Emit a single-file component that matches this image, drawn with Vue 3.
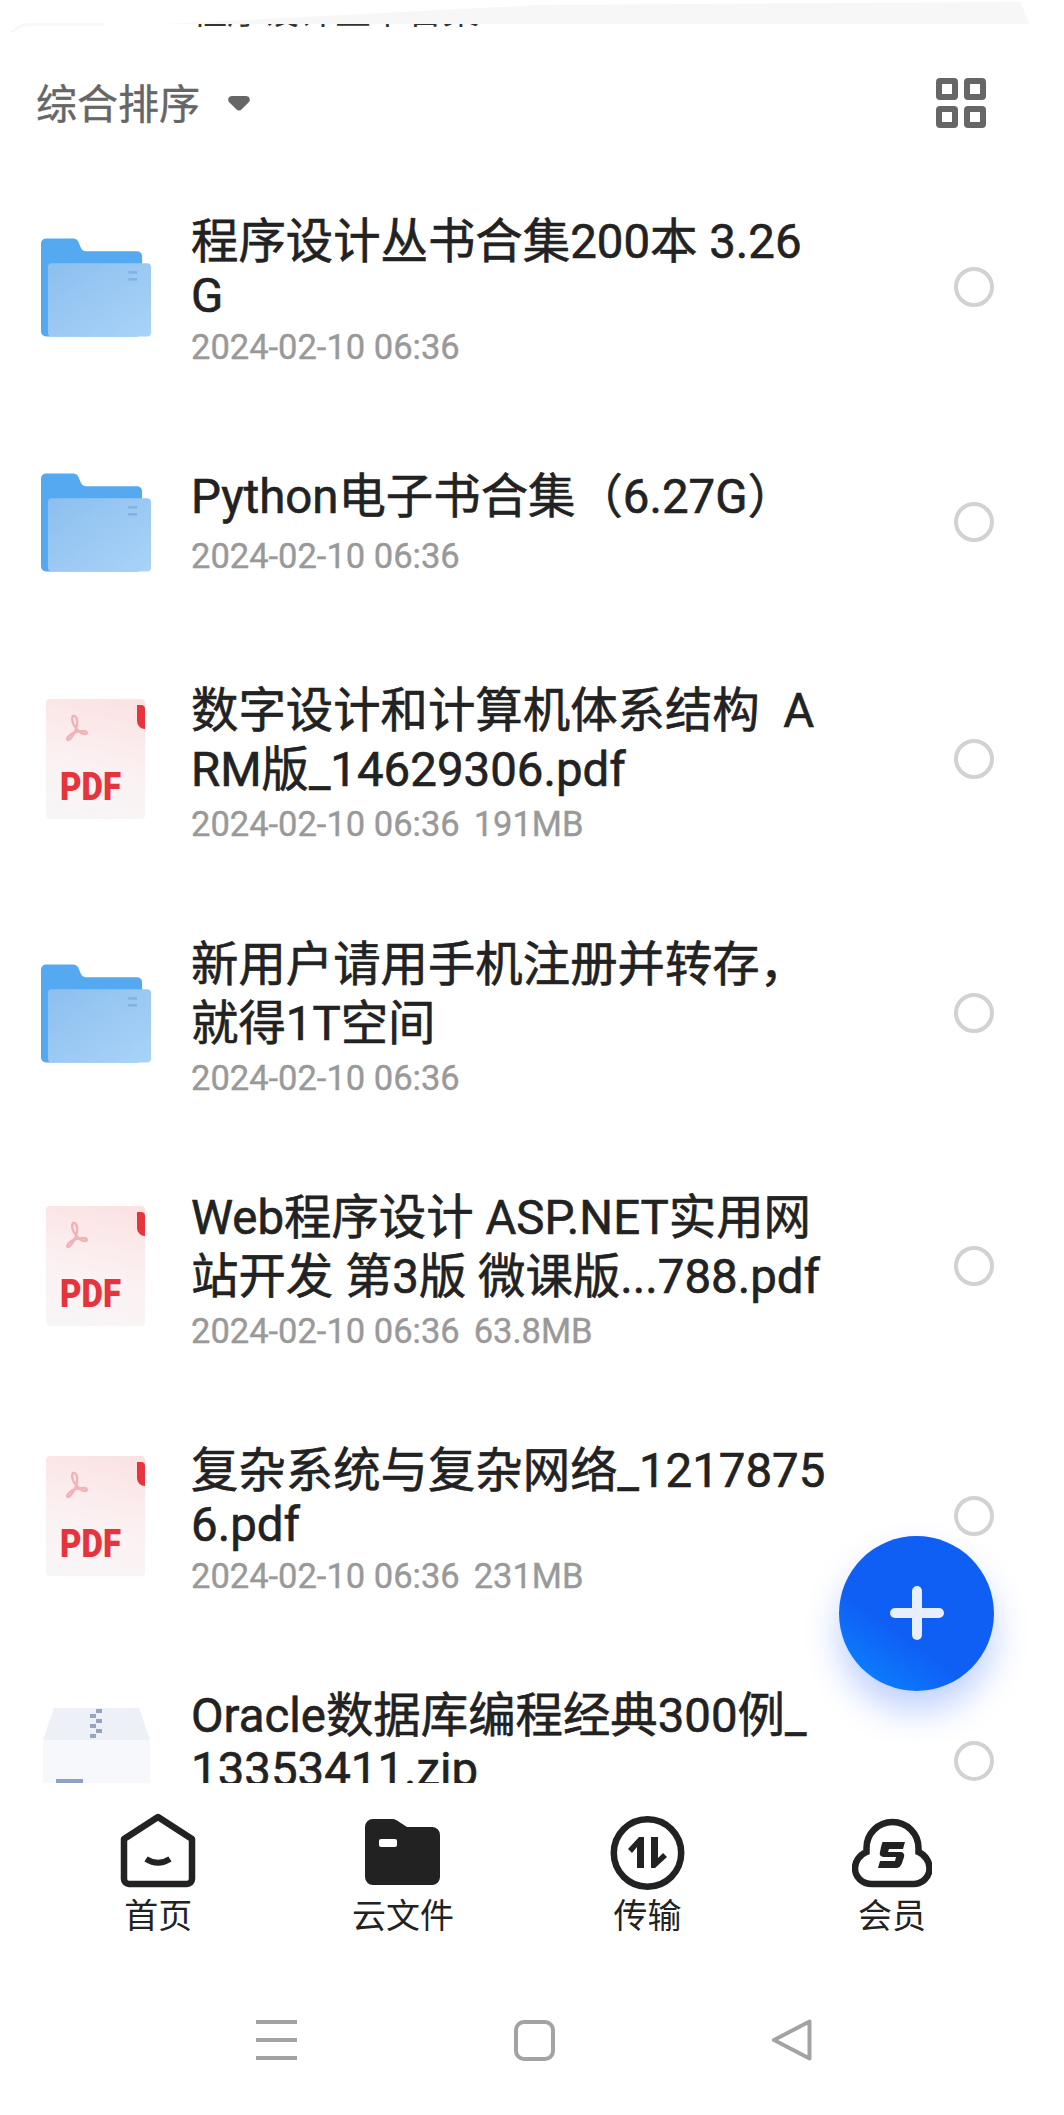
<template>
  <div class="screen">
    <div class="peek">
      <div class="peek-strip"></div>
      <div class="peek-corner"></div>
      <div class="peek-text">程序设计丛书合集</div>
    </div>

    <div class="sort-bar">
      <div class="sort-label">综合排序</div>
      <svg class="sort-arrow" viewBox="0 0 24 16" width="24" height="16">
        <path d="M5 1h14c3 0 5 3 3 6l-7 7c-2 2-4 2-6 0L2 7C0 4 2 1 5 1z" fill="#666" />
      </svg>
      <svg class="grid-icon" viewBox="0 0 50 50" width="50" height="50">
        <rect x="3" y="3" width="16" height="16" rx="1" />
        <rect x="31" y="3" width="16" height="16" rx="1" />
        <rect x="3" y="31" width="16" height="16" rx="1" />
        <rect x="31" y="31" width="16" height="16" rx="1" />
      </svg>
    </div>

    <div class="list">
      <div v-for="(row, i) in rows" :key="i" class="row" :style="{ marginBottom: row.gap + 'px' }">
        <div class="file-icon">
          <svg v-if="row.type === 'folder'" viewBox="0 0 112 100" width="112" height="100">
            <defs>
              <linearGradient :id="'front' + i" x1="0" y1="0" x2="1" y2="1">
                <stop offset="0" stop-color="#8cbfef" />
                <stop offset="1" stop-color="#a9d3f8" />
              </linearGradient>
            </defs>
            <path d="M0 6a5 5 0 0 1 5-5h28a6 6 0 0 1 5 4l2 5a6 6 0 0 0 5 4h52a5 5 0 0 1 5 5v76a5 5 0 0 1-5 5H5a5 5 0 0 1-5-5z" fill="#55a9f0" />
            <rect x="7" y="26" width="104" height="74" rx="4" :fill="'url(#front' + i + ')'" />
            <rect x="88" y="34" width="9" height="2.5" fill="#7fb2e2" />
            <rect x="88" y="41" width="9" height="2.5" fill="#7fb2e2" />
          </svg>
          <svg v-else-if="row.type === 'pdf'" class="pdf-icon" viewBox="0 0 100 120" width="100" height="120">
            <defs>
              <linearGradient :id="'paper' + i" x1="0.6" y1="0" x2="0.4" y2="1">
                <stop offset="0" stop-color="#fbe3e4" />
                <stop offset="0.55" stop-color="#fbf1f2" />
                <stop offset="1" stop-color="#f8f5f6" />
              </linearGradient>
            </defs>
            <rect x="0" y="0" width="99" height="120" rx="4" :fill="'url(#paper' + i + ')'" />
            <path d="M91 6h4a4 4 0 0 1 4 4v20a8 8 0 0 1-8-8z" fill="#e8343c" />
            <path d="M27 17c-2 3 0 9 3 12 3 4 6 6 9 6 3 0 2-3-1-3-6 0-13 2-16 6-2 3 0 4 2 2 3-3 6-9 7-14 1-5-1-10-4-9z" fill="none" stroke="#efb3b9" stroke-width="2.4" />
            <text x="14" y="101" class="pdf-text" textLength="61" lengthAdjust="spacingAndGlyphs">PDF</text>
          </svg>
          <svg v-else viewBox="0 0 107 106" width="107" height="106">
            <path d="M11 0h85l11 32H0z" fill="#eef0f8" />
            <rect x="0" y="32" width="107" height="74" fill="#f7f8fc" />
            <rect x="53" y="1" width="6" height="4" fill="#98a3bf" />
            <rect x="47" y="6" width="6" height="4" fill="#98a3bf" />
            <rect x="53" y="11" width="6" height="4" fill="#98a3bf" />
            <rect x="47" y="16" width="6" height="4" fill="#98a3bf" />
            <rect x="53" y="21" width="6" height="4" fill="#98a3bf" />
            <rect x="47" y="26" width="6" height="4" fill="#98a3bf" />
            <rect x="13" y="71" width="27" height="6" fill="#8fa2c2" />
          </svg>
        </div>
        <div class="info" :class="{ single: row.lines.length === 1 }">
          <div v-for="line in row.lines" :key="line" class="title" :class="row.cls">{{ line }}</div>
          <div class="meta">{{ row.time }}<span v-if="row.size" class="size">{{ row.size }}</span></div>
        </div>
        <span class="radio"></span>
      </div>
    </div>

    <button class="fab">
      <span class="fab-h"></span>
      <span class="fab-v"></span>
    </button>

    <div class="tabbar">
      <div class="tab">
        <svg viewBox="0 0 80 80" width="80" height="80">
          <path d="M6 27 40 5l34 22v40a5 5 0 0 1-5 5H11a5 5 0 0 1-5-5z" fill="none" stroke="#222" stroke-width="6.5" stroke-linejoin="round" />
          <path d="M28 47c8 5 16 5 24 0" fill="none" stroke="#222" stroke-width="6" />
        </svg>
        <span>首页</span>
      </div>
      <div class="tab">
        <svg viewBox="0 0 80 80" width="80" height="80">
          <path d="M2 15a8 8 0 0 1 8-8h20a7 7 0 0 1 4 1.5L44 15h25a8 8 0 0 1 8 8v42a8 8 0 0 1-8 8H10a8 8 0 0 1-8-8z" fill="#222" />
          <rect x="16" y="27" width="18" height="8" rx="2" fill="#fff" />
        </svg>
        <span>云文件</span>
      </div>
      <div class="tab">
        <svg viewBox="0 0 80 80" width="80" height="80">
          <circle cx="40.5" cy="41" r="33.7" fill="none" stroke="#222" stroke-width="6.5" />
          <path d="M37 25v31h-7V35l-5 6-4-4 11-12z" fill="#222" />
          <path d="M44 56V25h7v21l5-5 4 4-12 11z" fill="#222" />
        </svg>
        <span>传输</span>
      </div>
      <div class="tab">
        <svg viewBox="0 0 80 80" width="80" height="80">
          <path d="M14.5 40v-4a26 26 0 0 1 52 0v4c7 3 11 10 11 16 0 10-8 16-16 16H20c-10 0-17-7-17-16 0-6 4-13 11.5-16z" fill="none" stroke="#222" stroke-width="6.5" />
          <path d="M31 30h22l-2 7H37l-1 3h12c3 0 5 2 4 5l-2 6c-1 3-3 5-6 5H26l2-7h15l1-4H33c-4 0-6-2-5-5l1-5c1-3 1-5 2-5z" fill="#222" />
        </svg>
        <span>会员</span>
      </div>
    </div>

    <div class="sysbar">
      <div class="sys-menu"><i></i><i></i><i></i></div>
      <div class="sys-home"></div>
      <svg class="sys-back" viewBox="0 0 42 42" width="42" height="42">
        <path d="M38.5 2.5v37L3 21z" fill="none" stroke="#a3a3a3" stroke-width="4" stroke-linejoin="round" />
      </svg>
    </div>
  </div>
</template>

<script setup>
const rows = [
  { type: 'folder', gap: 15, lines: ['程序设计丛书合集200本 3.26', 'G'], time: '2024-02-10 06:36', cls: 'tight' },
  { type: 'folder', gap: 17, lines: ['Python电子书合集（6.27G）'], time: '2024-02-10 06:36' },
  { type: 'pdf', gap: 34, lines: ['数字设计和计算机体系结构  A', 'RM版_14629306.pdf'], time: '2024-02-10 06:36', size: '191MB' },
  { type: 'folder', gap: 33, lines: ['新用户请用手机注册并转存，', '就得1T空间'], time: '2024-02-10 06:36' },
  { type: 'pdf', gap: 30, lines: ['Web程序设计 ASP.NET实用网', '站开发 第3版 微课版...788.pdf'], time: '2024-02-10 06:36', size: '63.8MB' },
  { type: 'pdf', gap: 25, lines: ['复杂系统与复杂网络_1217875', '6.pdf'], time: '2024-02-10 06:36', size: '231MB', cls: 'tight' },
  { type: 'zip', gap: 0, lines: ['Oracle数据库编程经典300例_', '13353411.zip'], time: '2024-02-10 06:36', cls: 'tight' }
]
</script>

<style>
html, body {
  margin: 0;
  background: #fff;
}
</style>

<style scoped>
.screen {
  position: relative;
  width: 1064px;
  height: 2115px;
  overflow: hidden;
  background: #fff;
  font-family: Roboto, "Noto Sans CJK SC", "Noto Sans", sans-serif;
  color: #222;
}
.peek {
  position: relative;
  height: 32px;
  overflow: hidden;
}
.peek-strip {
  height: 24px;
  background: #f7f7f7;
  clip-path: polygon(165px 24px, 540px 5px, 1020px 2px, 1030px 24px);
}
.peek-corner {
  position: absolute;
  left: 4px;
  top: 23px;
  width: 100px;
  height: 30px;
  box-sizing: border-box;
  border-top: 3px solid #f8f8f8;
  border-left: 3px solid #f4f4f4;
  border-top-left-radius: 26px;
}
.peek-text {
  position: absolute;
  left: 191px;
  top: -13px;
  font-size: 36px;
  line-height: 50px;
  color: #333;
  white-space: nowrap;
  clip-path: inset(37px 0 0 0);
}
.sort-bar {
  display: flex;
  align-items: center;
  height: 142px;
  padding: 0 78px 0 36px;
}
.sort-label {
  margin-top: -4px;
  font-size: 41px;
  color: #666;
  -webkit-text-stroke: .4px #666;
}
.sort-arrow {
  margin-left: 27px;
}
.grid-icon {
  margin-left: auto;
}
.grid-icon rect {
  fill: none;
  stroke: #666;
  stroke-width: 6;
}
.list {
  box-sizing: border-box;
  height: 1609px;
  padding-top: 3px;
  overflow: hidden;
}
.row {
  display: flex;
  align-items: center;
  height: 220px;
  padding: 0 70px 0 41px;
}
.file-icon {
  display: flex;
  justify-content: center;
  flex: none;
  width: 111px;
}
.pdf-icon {
  margin-left: -2px;
}
.info {
  flex: none;
  width: 660px;
  margin-top: 8px;
  margin-left: 39px;
}
.info.single {
  margin-top: 0;
}
.title {
  font-size: 47.4px;
  line-height: 59px;
  white-space: pre;
  -webkit-text-stroke: .6px #222;
}
.title.tight {
  line-height: 54px;
}
.meta {
  margin-top: 4px;
  font-size: 34.5px;
  line-height: 40px;
  color: #999;
  -webkit-text-stroke: .4px #999;
}
.single .meta {
  margin-top: 9px;
}
.size {
  margin-left: 14px;
}
.radio {
  flex: none;
  box-sizing: border-box;
  width: 40px;
  height: 40px;
  margin-left: auto;
  border: 4px solid #d2d2d2;
  border-radius: 50%;
}
.pdf-text {
  font-family: Roboto, sans-serif;
  font-size: 38px;
  font-weight: 900;
  fill: #e5343c;
}
.fab {
  position: absolute;
  left: 839px;
  top: 1536px;
  width: 155px;
  height: 155px;
  padding: 0;
  border: 0;
  border-radius: 50%;
  background: linear-gradient(215deg, #0f5ff5 0, #0f5ff5 62%, #0a8aff 100%);
  box-shadow: 0 20px 34px rgba(30, 90, 255, .28);
}
.fab-h,
.fab-v {
  position: absolute;
  border-radius: 5px;
  background: #e8effc;
}
.fab-h {
  left: 51px;
  top: 72px;
  width: 54px;
  height: 10px;
}
.fab-v {
  left: 73px;
  top: 50px;
  width: 10px;
  height: 54px;
}
.tabbar {
  position: relative;
  display: grid;
  grid-template-columns: repeat(4, 244.6px);
  height: 179px;
  padding: 29px 0 0 36px;
  background: #fff;
}
.tab {
  display: flex;
  flex-direction: column;
  align-items: center;
  font-size: 34px;
  line-height: 40px;
  color: #222;
}
.tab span {
  margin-top: 4px;
}
.sysbar {
  display: flex;
  align-items: center;
  height: 42px;
  margin-top: 28px;
  padding-left: 256px;
}
.sys-menu {
  display: flex;
  flex-direction: column;
  justify-content: space-between;
  width: 41px;
  height: 40px;
}
.sys-menu i {
  height: 4px;
  background: #a3a3a3;
}
.sys-home {
  box-sizing: border-box;
  width: 41px;
  height: 41px;
  margin-left: 217px;
  border: 4px solid #a3a3a3;
  border-radius: 10px;
}
.sys-back {
  margin-left: 216px;
}
</style>
